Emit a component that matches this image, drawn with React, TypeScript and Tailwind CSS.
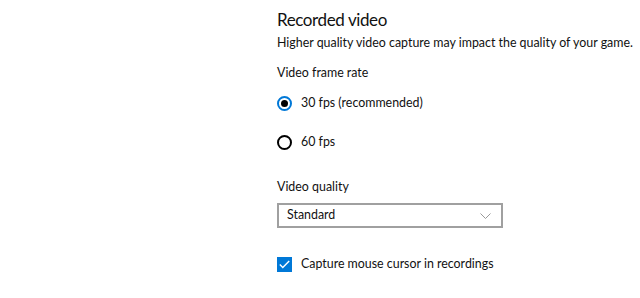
import { useState } from "react";

export default function App() {
  const [fps, setFps] = useState("30");
  const [cursor, setCursor] = useState(true);

  return (
    <div
      className="w-[640px] h-[298px] bg-white text-[#111] overflow-hidden"
      style={{ fontFamily: 'Lato, "Segoe UI", sans-serif' }}
    >
      <div className="pl-[277px] pt-[9px]">
        <h2 className="text-[17px] leading-[22px] font-normal tracking-[-0.4px] whitespace-nowrap">
          Recorded video
        </h2>
        <p className="text-[12.4px] leading-[18px] mt-[3px] whitespace-nowrap">
          Higher quality video capture may impact the quality of your game.
        </p>

        <div className="mt-[12px] text-[12.4px] leading-[18px]">Video frame rate</div>

        <div className="mt-[12px] flex flex-col gap-[21px]">
          {[
            { id: "30", label: "30 fps (recommended)" },
            { id: "60", label: "60 fps" },
          ].map((o) => (
            <button
              key={o.id}
              onClick={() => setFps(o.id)}
              className="flex items-center gap-[9px] h-[18px] text-[12.4px] leading-[18px] text-left"
            >
              {fps === o.id ? (
                <span className="w-[15px] h-[15px] rounded-full border-2 border-[#0078d7] flex items-center justify-center">
                  <span className="w-[7px] h-[7px] rounded-full bg-black" />
                </span>
              ) : (
                <span className="w-[15px] h-[15px] rounded-full border-2 border-black" />
              )}
              <span>{o.label}</span>
            </button>
          ))}
        </div>

        <div className="mt-[27px] text-[12.4px] leading-[18px]">Video quality</div>

        <div className="mt-[7px] w-[226px] h-[25px] border-2 border-[#a0a0a0] flex items-center justify-between pl-[8px] pr-[10px] text-[12.4px]">
          <span>Standard</span>
          <svg width="11" height="6" viewBox="0 0 11 6" fill="none" stroke="#999" strokeWidth="1">
            <path d="M0.5 0.5l5 5 5-5" />
          </svg>
        </div>

        <button
          onClick={() => setCursor(!cursor)}
          className="mt-[27px] flex items-center gap-[9px] text-[12.4px] leading-[18px]"
        >
          <span
            className={
              cursor
                ? "w-[15px] h-[15px] bg-[#0078d7] flex items-center justify-center"
                : "w-[15px] h-[15px] border-2 border-black"
            }
          >
            {cursor && (
              <svg width="11" height="9" viewBox="0 0 11 9" fill="none" stroke="white" strokeWidth="1.4">
                <path d="M0.8 4.6l3 3 6.4-6.6" />
              </svg>
            )}
          </span>
          <span>Capture mouse cursor in recordings</span>
        </button>
      </div>
    </div>
  );
}
